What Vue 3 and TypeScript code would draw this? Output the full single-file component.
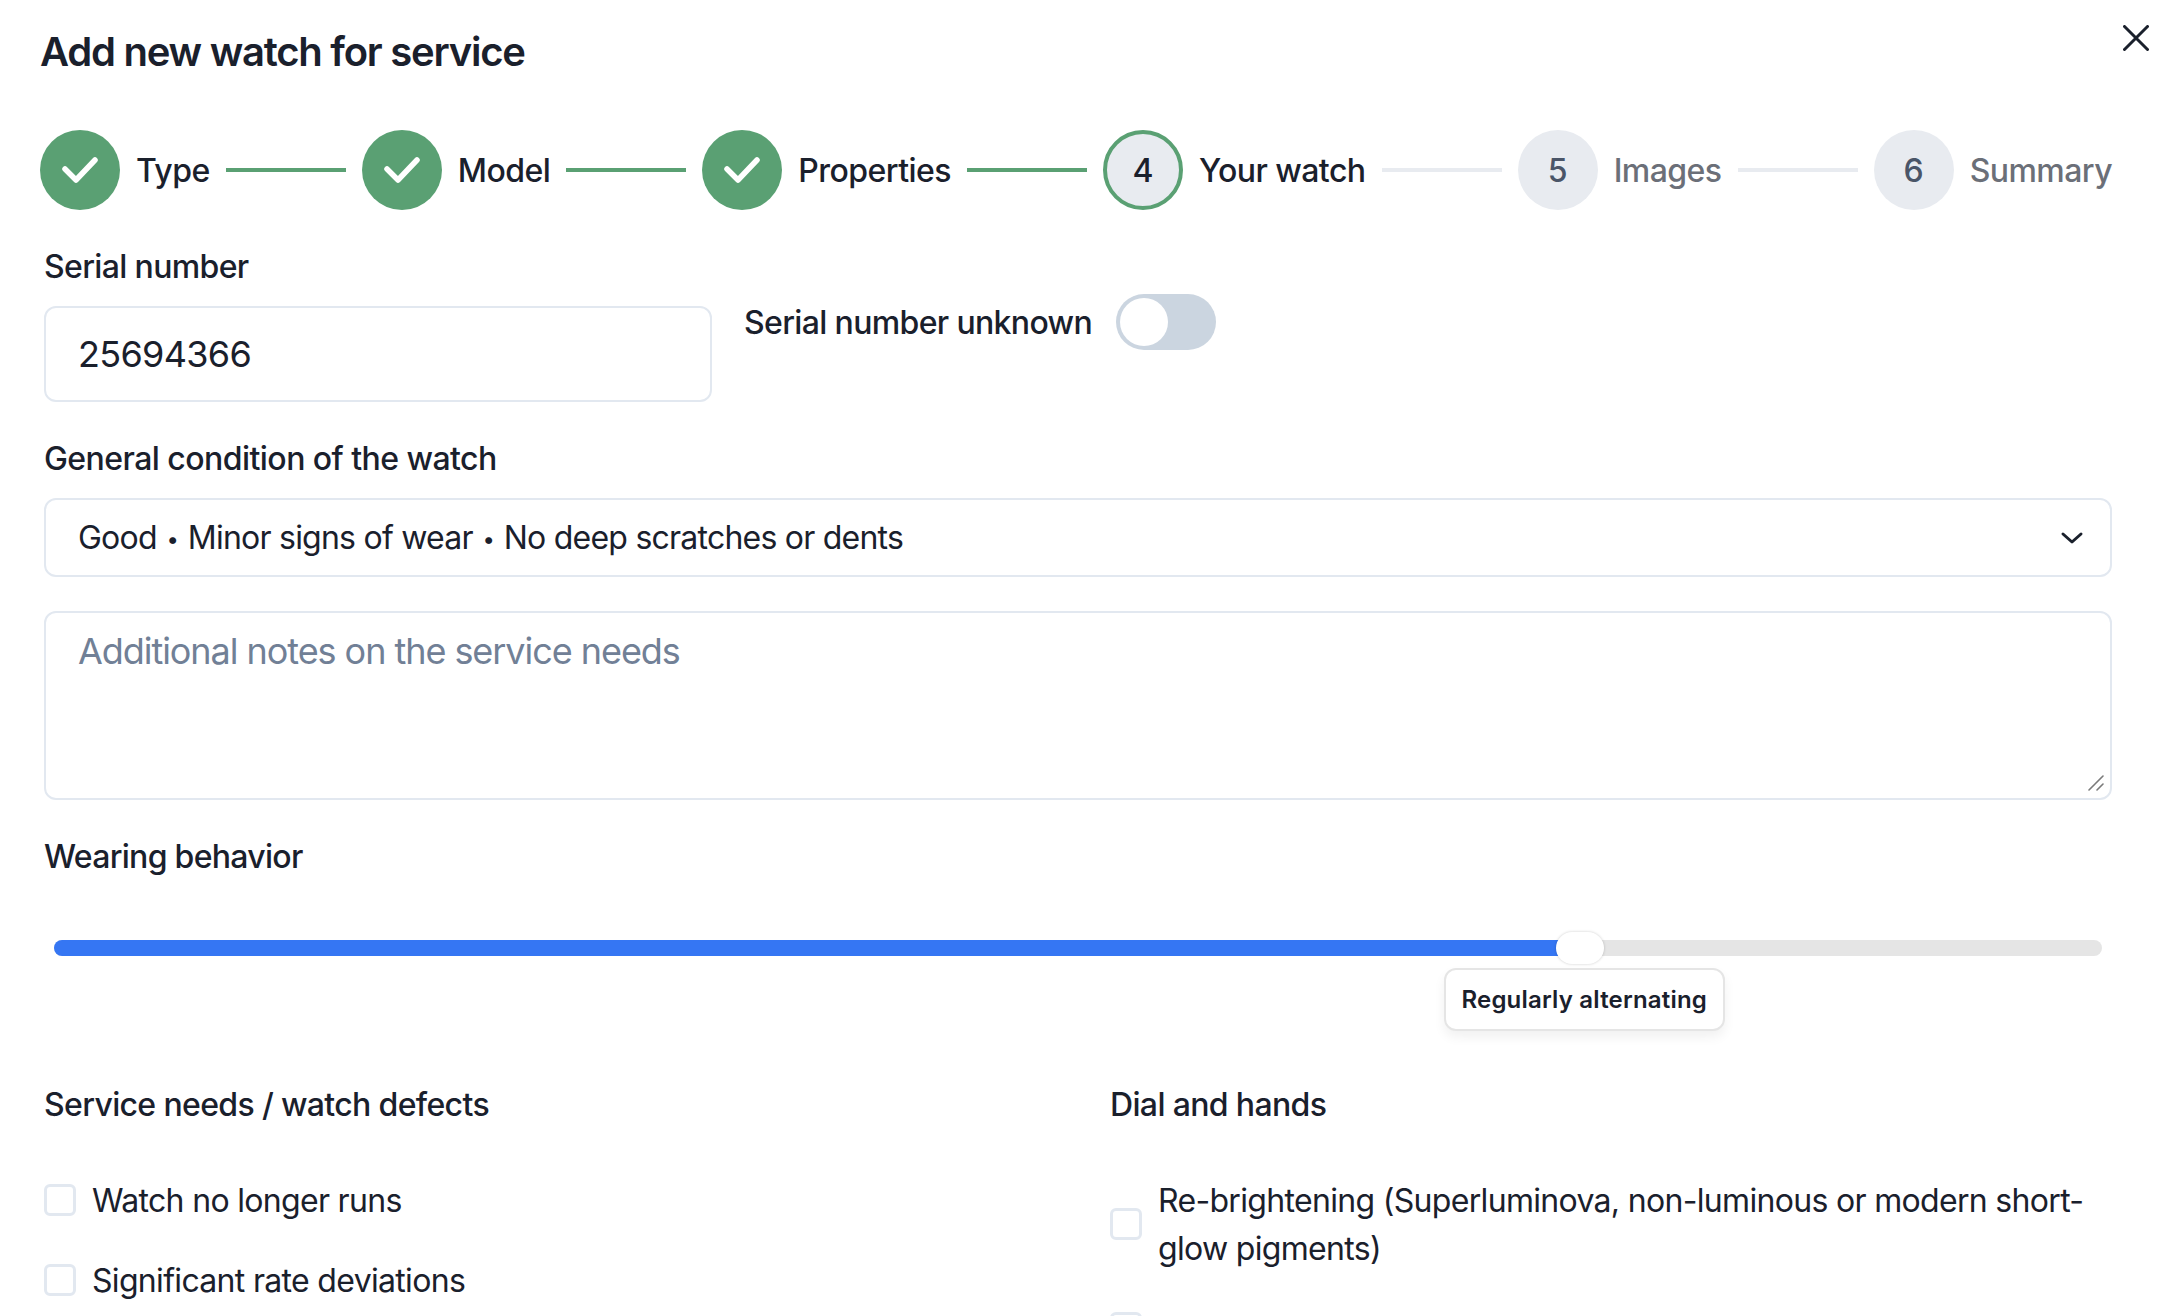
<template>
  <div class="dialog">
    <button class="close" type="button" aria-label="Close">
      <svg viewBox="0 0 26 26" width="26" height="26" fill="none" stroke="#1a202c" stroke-width="3" stroke-linecap="round">
        <path d="M1.5 1.5l23 23M24.5 1.5l-23 23" />
      </svg>
    </button>

    <h1 class="title">Add new watch for service</h1>

    <ol class="steps">
      <template v-for="(step, index) in steps" :key="step.label">
        <li class="step" :class="step.state">
          <span class="step-circle">
            <svg v-if="step.state === 'done'" viewBox="-40 -40 80 80" width="80" height="80" fill="none" stroke="#fff" stroke-width="5.5" stroke-linecap="round" stroke-linejoin="round">
              <path d="M-15 -1L-4 10L15 -10" />
            </svg>
            <template v-else>{{ index + 1 }}</template>
          </span>
          <span class="step-label">{{ step.label }}</span>
        </li>
        <li v-if="index < steps.length - 1" class="connector" :class="{ green: step.state !== 'todo' && steps[index + 1].state !== 'todo' }"></li>
      </template>
    </ol>

    <div class="form">
      <div class="serial-row">
        <div class="serial-col">
          <label class="label" for="serial">Serial number</label>
          <input id="serial" class="control serial-input" type="text" value="25694366" />
        </div>
        <div class="unknown">
          <span class="label">Serial number unknown</span>
          <span class="toggle"><span class="knob"></span></span>
        </div>
      </div>

      <label class="label condition-label">General condition of the watch</label>
      <div class="control select">
        <span>Good <i class="dot">•</i> Minor signs of wear <i class="dot">•</i> No deep scratches or dents</span>
        <svg viewBox="0 0 24 24" width="24" height="24" fill="none" stroke="#1a202c" stroke-width="3" stroke-linecap="round" stroke-linejoin="round">
          <path d="M3 8l9 8 9-8" />
        </svg>
      </div>

      <div class="notes-wrap">
        <textarea class="control notes" placeholder="Additional notes on the service needs"></textarea>
        <svg class="grip" viewBox="0 0 16 16" width="16" height="16" fill="none" stroke="#7a7a7a" stroke-width="1.6" stroke-linecap="round">
          <path d="M1 15L15 1M9 15l6-6" />
        </svg>
      </div>

      <label class="label wearing-label">Wearing behavior</label>
      <div class="slider">
        <div class="track">
          <div class="fill" :style="{ width: wearing + '%' }"></div>
          <div class="thumb" :style="{ left: wearing + '%' }"></div>
          <div class="tip" :style="{ left: wearing + '%' }">Regularly alternating</div>
        </div>
      </div>

      <div class="columns">
        <section v-for="col in columns" :key="col.title">
          <h2 class="label col-title">{{ col.title }}</h2>
          <div class="checks">
            <label v-for="item in col.items" :key="item" class="check">
              <span class="box"></span>
              <span class="check-text">{{ item }}</span>
            </label>
          </div>
        </section>
      </div>
    </div>
  </div>
</template>

<script setup lang="ts">
interface Step {
  label: string
  state: 'done' | 'current' | 'todo'
}

const steps: Step[] = [
  { label: 'Type', state: 'done' },
  { label: 'Model', state: 'done' },
  { label: 'Properties', state: 'done' },
  { label: 'Your watch', state: 'current' },
  { label: 'Images', state: 'todo' },
  { label: 'Summary', state: 'todo' }
]

const wearing = 74.5

const columns = [
  {
    title: 'Service needs / watch defects',
    items: ['Watch no longer runs', 'Significant rate deviations']
  },
  {
    title: 'Dial and hands',
    items: ['Re-brightening (Superluminova, non-luminous or modern short-glow pigments)', '']
  }
]
</script>

<style>
html,
body {
  margin: 0;
  height: 100%;
  overflow: hidden;
  background: #fff;
}
</style>

<style scoped>
.dialog {
  position: relative;
  box-sizing: border-box;
  height: 1316px;
  overflow: hidden;
  padding: 26px 60px 0 40px;
  font-family: Inter, "Noto Sans", sans-serif;
  color: #1a202c;
}

.close {
  position: absolute;
  top: 25px;
  left: 2123px;
  padding: 0;
  border: 0;
  background: none;
  line-height: 0;
}

.title {
  margin: 0;
  font-size: 40px;
  line-height: 52px;
  font-weight: 600;
  letter-spacing: -1.24px;
}

/* stepper */
.steps {
  display: flex;
  align-items: center;
  gap: 16px;
  margin: 52px 0 0;
  padding: 0;
  list-style: none;
}

.step {
  display: flex;
  align-items: center;
  gap: 16px;
}

.step-circle {
  box-sizing: border-box;
  display: flex;
  align-items: center;
  justify-content: center;
  width: 80px;
  height: 80px;
  border-radius: 50%;
  background: #e8ebf0;
  font-size: 32px;
  font-weight: 500;
  color: #4a5568;
}

.done .step-circle {
  background: #5aa073;
}

.current .step-circle {
  border: 4px solid #5aa073;
  color: #1a202c;
}

.step-label {
  padding-top: 2px;
  font-size: 32px;
  line-height: 48px;
  font-weight: 500;
  letter-spacing: -0.55px;
}

.todo .step-label {
  color: #6b6f78;
}

.connector {
  flex: 1;
  height: 4px;
  background: #e8ebf0;
}

.connector.green {
  background: #5aa073;
}

/* form */
.form {
  width: 2068px;
  margin-left: 4px;
  margin-top: 32px;
}

.label {
  display: block;
  margin-bottom: -2px;
  font-size: 32px;
  line-height: 50px;
  font-weight: 500;
  letter-spacing: -0.65px;
}

.control {
  box-sizing: border-box;
  display: block;
  width: 100%;
  border: 2px solid #e2e8f0;
  border-radius: 12px;
  background: #fff;
  padding: 0 32px;
  font-family: inherit;
  color: #1a202c;
  outline: none;
}

.serial-row {
  display: flex;
  gap: 32px;
}

.serial-col {
  width: 668px;
}

.serial-input {
  height: 96px;
  margin-top: 16px;
  font-size: 36px;
  letter-spacing: -0.7px;
}

.unknown {
  display: flex;
  align-items: center;
  gap: 24px;
  height: 56px;
  margin-top: 52px;
}

.toggle {
  display: block;
  box-sizing: border-box;
  width: 100px;
  height: 56px;
  padding: 4px;
  border-radius: 28px;
  background: #cbd5e0;
}

.knob {
  display: block;
  width: 48px;
  height: 48px;
  border-radius: 50%;
  background: #fff;
}

.condition-label {
  margin-top: 33px;
  margin-bottom: 0;
  line-height: 48px;
  letter-spacing: -0.55px;
}

.select {
  display: flex;
  align-items: center;
  justify-content: space-between;
  height: 79px;
  margin-top: 15px;
  padding-right: 26px;
  font-size: 32px;
  letter-spacing: -0.77px;
}

.dot {
  margin: 0 1.5px;
  font-style: normal;
  font-size: 22px;
  vertical-align: 2px;
}

.notes-wrap {
  position: relative;
  margin-top: 34px;
}

.notes {
  height: 189px;
  padding-top: 14px;
  font-size: 36px;
  line-height: 48px;
  letter-spacing: -1.05px;
  resize: none;
}

.notes::placeholder {
  color: #718096;
  opacity: 1;
}

.grip {
  position: absolute;
  right: 8px;
  bottom: 9px;
}

.wearing-label {
  margin-top: 32px;
  letter-spacing: -0.7px;
}

.slider {
  padding: 60px 10px 0;
}

.track {
  position: relative;
  height: 16px;
  border-radius: 8px;
  background: #e5e5e5;
}

.fill {
  height: 100%;
  border-radius: 8px 0 0 8px;
  background: #3576f3;
}

.thumb {
  position: absolute;
  top: -8px;
  width: 48px;
  height: 32px;
  margin-left: -24px;
  border-radius: 16px;
  background: #fff;
  box-shadow: 0 0 3px rgba(0, 0, 0, 0.2);
}

.tip {
  position: absolute;
  top: 28px;
  box-sizing: border-box;
  width: 281px;
  height: 63px;
  margin-left: -136px;
  border: 2px solid #e5e5e5;
  border-radius: 12px;
  background: #fff;
  box-shadow: 0 6px 12px rgba(0, 0, 0, 0.06);
  font-size: 24px;
  line-height: 59px;
  font-weight: 600;
  letter-spacing: 0.2px;
  text-align: center;
  white-space: nowrap;
}

.columns {
  display: grid;
  grid-template-columns: 1002px 1002px;
  gap: 64px;
  margin-top: 124px;
}

.col-title {
  margin: 0 0 -2px;
}

.checks {
  display: flex;
  flex-direction: column;
  gap: 32px;
  margin-top: 48px;
}

.check {
  display: flex;
  align-items: center;
  gap: 16px;
  font-size: 32px;
  line-height: 48px;
  min-height: 48px;
  letter-spacing: -0.68px;
}

.check-text {
  position: relative;
  top: 1px;
}

.box {
  flex: none;
  box-sizing: border-box;
  width: 32px;
  height: 32px;
  border: 3px solid #e2e8f0;
  border-radius: 6px;
  background: #fff;
}
</style>
